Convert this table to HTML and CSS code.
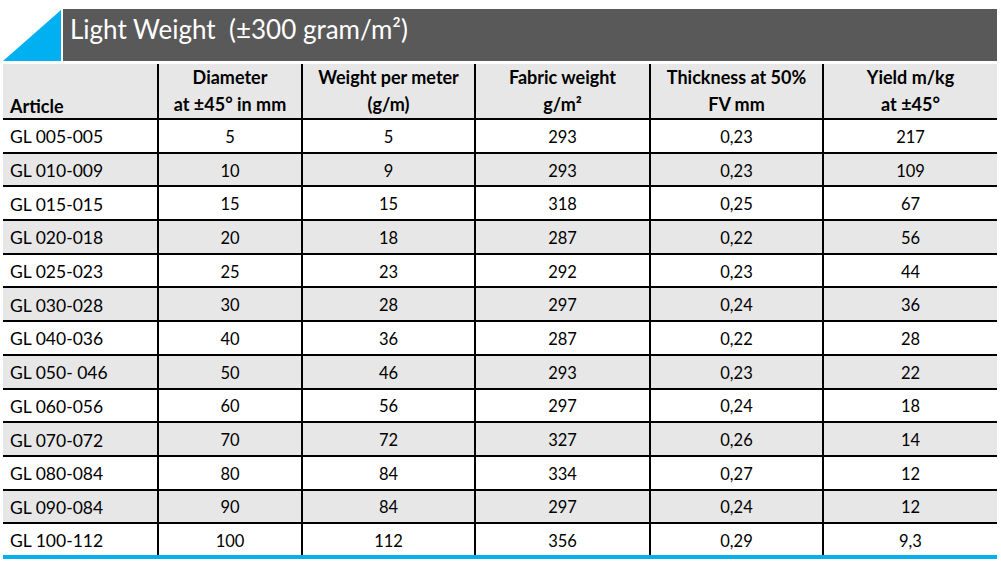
FILE: index.html
```html
<!DOCTYPE html>
<html lang="en">
<head>
  <meta charset="UTF-8">
  <title>Light Weight</title>
  <link rel="stylesheet" href="styles.css">
</head>
<body>

<div class="sheet">
  <div class="title">
    <svg class="corner" width="58" height="51" viewBox="0 0 58 51">
      <polygon points="58,0 58,51 0,51" fill="#00b0f0"/>
    </svg>
    <div class="title-bar">Light Weight&nbsp; (±300 gram/m²)</div>
  </div>

  <table class="specs">
    <thead>
      <tr>
        <th class="article">Article</th>
        <th>Diameter<br>at ±45° in mm</th>
        <th>Weight per meter<br>(g/m)</th>
        <th>Fabric weight<br>g/m²</th>
        <th>Thickness at 50%<br>FV mm</th>
        <th>Yield m/kg<br>at ±45°</th>
      </tr>
    </thead>
    <tbody>
      <tr><td>GL 005-005</td><td>5</td><td>5</td><td>293</td><td>0,23</td><td>217</td></tr>
      <tr><td>GL 010-009</td><td>10</td><td>9</td><td>293</td><td>0,23</td><td>109</td></tr>
      <tr><td>GL 015-015</td><td>15</td><td>15</td><td>318</td><td>0,25</td><td>67</td></tr>
      <tr><td>GL 020-018</td><td>20</td><td>18</td><td>287</td><td>0,22</td><td>56</td></tr>
      <tr><td>GL 025-023</td><td>25</td><td>23</td><td>292</td><td>0,23</td><td>44</td></tr>
      <tr><td>GL 030-028</td><td>30</td><td>28</td><td>297</td><td>0,24</td><td>36</td></tr>
      <tr><td>GL 040-036</td><td>40</td><td>36</td><td>287</td><td>0,22</td><td>28</td></tr>
      <tr><td>GL 050- 046</td><td>50</td><td>46</td><td>293</td><td>0,23</td><td>22</td></tr>
      <tr><td>GL 060-056</td><td>60</td><td>56</td><td>297</td><td>0,24</td><td>18</td></tr>
      <tr><td>GL 070-072</td><td>70</td><td>72</td><td>327</td><td>0,26</td><td>14</td></tr>
      <tr><td>GL 080-084</td><td>80</td><td>84</td><td>334</td><td>0,27</td><td>12</td></tr>
      <tr><td>GL 090-084</td><td>90</td><td>84</td><td>297</td><td>0,24</td><td>12</td></tr>
      <tr><td>GL 100-112</td><td>100</td><td>112</td><td>356</td><td>0,29</td><td>9,3</td></tr>
    </tbody>
  </table>
</div>

</body>
</html>
```

FILE: styles.css
```css
* {
  box-sizing: border-box;
}

body {
  margin: 0;
  background: #ffffff;
  font-family: Lato, "Open Sans", sans-serif;
  color: #000000;
}

.sheet {
  width: 994px;
  margin: 9px 0 0 3px;
}

.title {
  display: flex;
  align-items: flex-end;
  gap: 2px;
  height: 52px;
}

.corner {
  display: block;
}

.title-bar {
  flex: 1;
  height: 52px;
  background: #595959;
  color: #ffffff;
  font-size: 26px;
  line-height: 40px;
  padding-left: 7px;
  white-space: pre;
}

.specs {
  width: 994px;
  margin-top: 3px;
  border-collapse: collapse;
  table-layout: fixed;
}

.specs th {
  background: #e7e7e7;
  font-size: 18px;
  font-weight: bold;
  line-height: 27px;
  height: 55px;
  padding: 0 2px;
  text-align: center;
  vertical-align: bottom;
  border-left: 2px solid #000000;
  border-bottom: 2px solid #000000;
  white-space: nowrap;
}

.specs th:first-child,
.specs td:first-child {
  border-left: none;
}

.specs th.article {
  text-align: left;
  padding-left: 7px;
  line-height: 24px;
}

.specs th:nth-child(1) { width: 155px; }
.specs th:nth-child(2) { width: 144px; }
.specs th:nth-child(3) { width: 173px; }
.specs th:nth-child(4) { width: 175px; }
.specs th:nth-child(5) { width: 173px; }

.specs td {
  height: 33.7px;
  padding: 2px 4px 0;
  font-size: 16.5px;
  text-align: center;
  vertical-align: middle;
  border-left: 2px solid #000000;
  border-bottom: 2px solid #000000;
}

.specs td:first-child {
  text-align: left;
  padding-left: 7px;
  font-size: 17.5px;
}

.specs tbody tr:nth-child(even) td {
  background: #e7e7e7;
}

.specs tbody tr:last-child td {
  border-bottom: 4px solid #00b0f0;
}
```
